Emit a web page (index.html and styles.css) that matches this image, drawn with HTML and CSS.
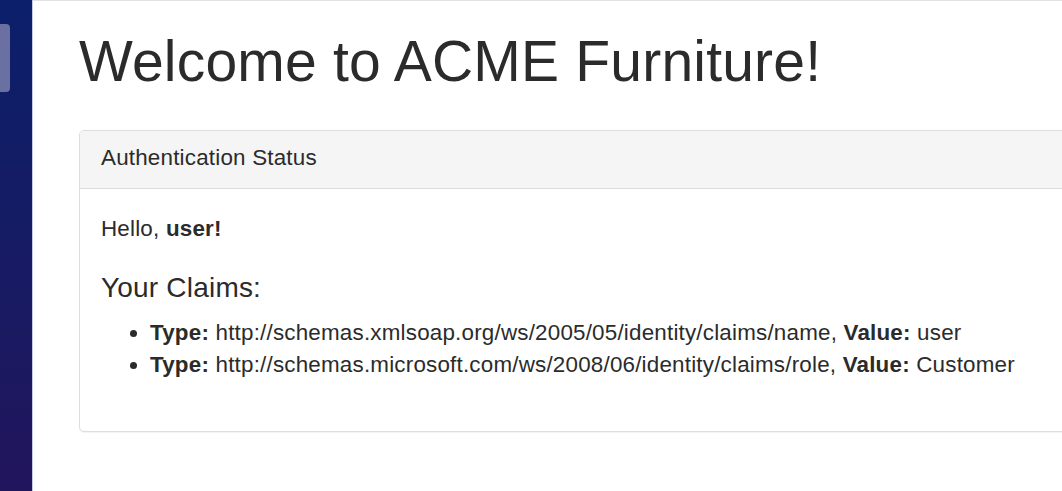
FILE: index.html
```html
<!DOCTYPE html>
<html lang="en">
<head>
<meta charset="utf-8">
<title>ACME Furniture</title>
<link rel="stylesheet" href="styles.css">
</head>
<body>
<div class="layout">
  <aside class="sidebar">
    <div class="sidebar-tab"></div>
  </aside>
  <main class="main">
    <h1 class="title">Welcome to ACME Furniture!</h1>
    <section class="panel">
      <div class="panel-heading">Authentication Status</div>
      <div class="panel-body">
        <p class="greeting">Hello, <strong>user!</strong></p>
        <h4 class="claims-title">Your Claims:</h4>
        <ul class="claims">
          <li><strong>Type:</strong> http://schemas.xmlsoap.org/ws/2005/05/identity/claims/name, <strong>Value:</strong> user</li>
          <li><strong>Type:</strong> http://schemas.microsoft.com/ws/2008/06/identity/claims/role, <strong>Value:</strong> Customer</li>
        </ul>
      </div>
    </section>
  </main>
</div>
</body>
</html>
```
FILE: styles.css
```css
html, body {
  margin: 0;
  padding: 0;
  height: 100%;
  overflow: hidden;
  background: #fff;
}
body {
  font-family: "Liberation Sans", Arial, sans-serif;
  font-size: 22.4px;
  line-height: 32px;
  letter-spacing: 0.2px;
  color: #2b2b2b;
}
.layout {
  display: flex;
  height: 100%;
}
.sidebar {
  flex: 0 0 32px;
  width: 32px;
  border-right: 1px solid #c4c7e6;
  background: linear-gradient(180deg, #0c1f6a 0%, #151c64 45%, #21155c 100%);
  padding-top: 24px;
  box-sizing: content-box;
}
.sidebar-tab {
  width: 10px;
  height: 68px;
  background: #6a70a2;
  border-radius: 0 4px 4px 0;
}
.main {
  flex: 1 1 auto;
  min-width: 0;
  border-top: 1px solid #e2e2e2;
  padding-left: 46px;
}
.title {
  font-size: 57px;
  font-weight: 400;
  line-height: 1.1;
  letter-spacing: 0.2px;
  margin: 28.5px 0 37.5px;
  color: #2b2b2b;
}
.panel {
  width: 1100px;
  border: 1px solid #dddddd;
  border-radius: 5px;
  background: #fff;
  box-shadow: 0 1px 1px rgba(0,0,0,0.05);
}
.panel-heading {
  background: #f5f5f5;
  border-bottom: 1px solid #dddddd;
  border-radius: 4px 4px 0 0;
  padding: 11px 21px 14px;
}
.panel-body {
  padding: 24px 21px 36px;
}
.greeting {
  margin: 0 0 28px;
}
.claims-title {
  font-size: 28px;
  font-weight: 400;
  line-height: 1.1;
  margin: 0 0 14px;
}
.claims {
  margin: 0 0 14px;
  padding-left: 49px;
}
```
